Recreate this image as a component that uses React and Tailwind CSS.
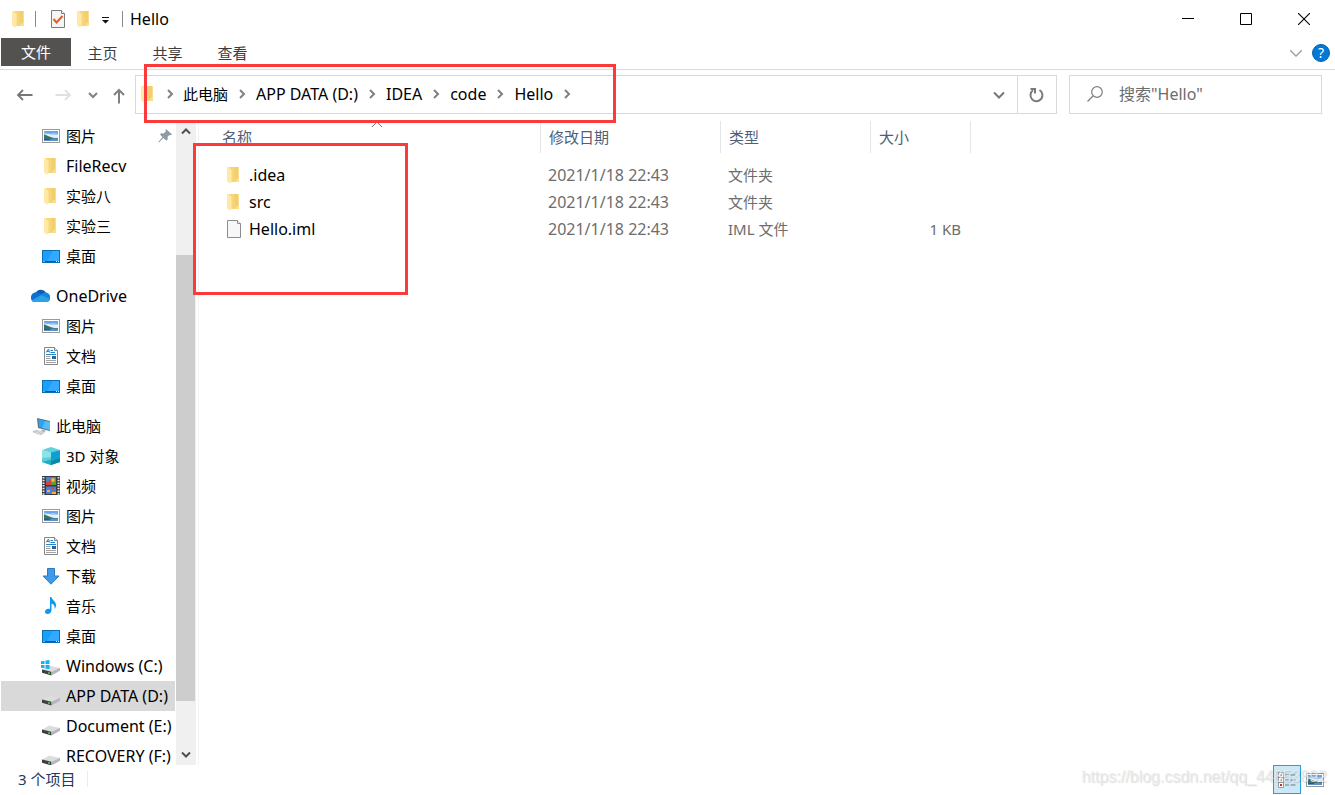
const ICON = 'h-5 w-5 shrink-0'

function FolderIcon({ className = ICON }) {
  return (
    <svg className={className} viewBox="0 0 20 20" aria-hidden="true">
      <path d="M6 2h9.5v11.500h.5V17H7z" fill="#f5d67c" />
      <path d="M11 2h4.500v11.500L12 15z" fill="#f3cf6b" />
      <path d="M14 13.500h2V17h-4z" fill="#fbe08a" />
      <path d="M4 2h1l3.500 3v12L7 18.500 4 16.500z" fill="#ffe9a6" />
    </svg>
  )
}

function PictureIcon({ className = ICON }) {
  return (
    <svg className={className} viewBox="0 0 20 20" aria-hidden="true">
      <rect x="2.5" y="3.5" width="17" height="13" fill="#fff" stroke="#9a9a9a" />
      <rect x="4" y="5" width="14" height="10" fill="#a9d0f5" />
      <path d="M4 5h14v3l-5-1-4 1-5-1.5z" fill="#6ba6ec" />
      <path d="M6 8.5c2-1.5 4-.5 5 .5h7v3H4V9z" fill="#e3f1fb" />
      <path d="M4 8.5c3 .5 6 3 10 3.500h4v1H4z" fill="#3f6f62" />
      <path d="M4 12.500h14V15H4z" fill="#5a92c8" />
      <path d="M4 12.500h8l-3 1.500H4z" fill="#2f5a5e" />
    </svg>
  )
}

function DesktopIcon() {
  return (
    <svg className={ICON} viewBox="0 0 20 20" aria-hidden="true">
      <rect x="2.5" y="4.5" width="17" height="12" fill="#1a9fff" stroke="#0b6fb5" />
      <path d="M13 5h6v10H7z" fill="#33aaff" />
      <path d="M3 15.500h16" stroke="#0a5a97" />
      <path d="M3.500 15.500h1M16 15.500h1M18 15.500h1" stroke="#fff" />
    </svg>
  )
}

function DocumentIcon() {
  return (
    <svg className={ICON} viewBox="0 0 20 20" aria-hidden="true">
      <path d="M4.500 1.500h10l3 3v14h-13z" fill="#fff" stroke="#868686" />
      <path d="M14.500 1.500v3h3" fill="#e8e8e8" stroke="#868686" />
      <path d="m6 6.500 2.500-3.500 1 3.500M7 5.500h2M10.500 4.500H13M10.500 6.500H15M6 8.500h10" stroke="#1e88d2" fill="none" />
      <path d="M6 10.500h4.500M6 12.500h4.500M6 14.500h10M6 16.500h10" stroke="#a3a3a3" />
      <rect x="12" y="10" width="4" height="3" fill="#2568a5" />
    </svg>
  )
}

function OneDriveIcon() {
  return (
    <svg className={ICON} viewBox="0 0 20 20" aria-hidden="true">
      <path d="M5.500 7A6 6 0 0 1 16 6.500L12 11z" fill="#0a5cb3" />
      <path d="M5 6.500c2.500-.8 4 .2 6 1.500L15 11 4 16a5 5 0 0 1 1-9.500z" fill="#1070cf" />
      <path d="M11 8.500c1.200-1.800 3.300-2.400 5-2 0 0 4.300.8 4.300 4.900 0 1.500-.4 2.600-.9 3.200z" fill="#1685dc" />
      <path d="M1.500 14.500 11 9l9 4.200A3.500 3.500 0 0 1 16.500 16H5a4.500 4.500 0 0 1-3.500-1.500z" fill="#28a3ea" />
    </svg>
  )
}

function ComputerIcon() {
  return (
    <svg className={ICON} viewBox="0 0 20 20" aria-hidden="true">
      <path d="M7 2 20.500 5v10L8 12z" fill="#557386" />
      <path d="M8.500 3.300 20 6v8L9 11z" fill="#29a4f2" />
      <path d="M15 4.900 20 6v8l-8-2.200z" fill="#58bcf7" />
      <path d="m12 13.500 4 1-2 2-3.500-1z" fill="#aab1b6" />
      <path d="m1.500 16 5-2.500 9 3-5 3z" fill="#dde0e2" />
      <path d="m3 16 3.500-1.600M5 16.700l3.500-1.700M7.500 17.500l3.500-1.800M10 18.400l3.500-1.800" stroke="#b9bfc4" />
    </svg>
  )
}

function CubeIcon() {
  return (
    <svg className={ICON} viewBox="0 0 20 20" aria-hidden="true">
      <path d="m2 4 9-3 9 3-9 3z" fill="#63d0e0" />
      <path d="M2 4v12l9 3V6.500z" fill="#8ee2ea" />
      <path d="M2 12v4l9 3v-8z" fill="#5fcdda" />
      <path d="M20 4v12l-9 3V6.500z" fill="#0fa0d0" />
      <path d="M11 15.500 20 12v4l-9 3z" fill="#0b87a8" />
      <path d="M2 16l9-2.500V19z" fill="#22aebf" />
    </svg>
  )
}

function VideoIcon() {
  return (
    <svg className={ICON} viewBox="0 0 20 20" aria-hidden="true">
      <rect x="2" y="0" width="18" height="19" fill="#3b3b3b" />
      <path d="M3.500 1v18M18.500 1v18" stroke="#e8e8e8" strokeWidth="2" strokeDasharray="1.500 1.200" />
      <rect x="6" y="1" width="10" height="8" fill="#4a7fe0" />
      <rect x="6" y="10.500" width="10" height="7.500" fill="#4a7fe0" />
      <path d="M6 6h3V4h2v5H6z" fill="#d8432c" />
      <circle cx="13" cy="4" r="2" fill="#f3b823" />
      <path d="M11 6h5v3h-5z" fill="#54a23a" />
      <path d="M10 11h5l-2.500 3z" fill="#e0482c" />
      <path d="M7 14h3v2H7zM12 16h4v2h-4z" fill="#f3b823" />
    </svg>
  )
}

function DownloadIcon() {
  return (
    <svg className={ICON} viewBox="0 0 20 20" aria-hidden="true">
      <path d="M7.500 2.500h7V10H19l-8 8.200L3 10h4.500z" fill="#3e9be9" stroke="#2b7cc4" />
    </svg>
  )
}

function MusicIcon() {
  return (
    <svg className={ICON} viewBox="0 0 20 20" aria-hidden="true">
      <path d="M10 1h1.500c.3 3 4.500 4 4.500 8 0 1.700-.6 3-1.500 4 .5-3-.5-4.500-3-5.500V14c0 2.500-2 4-4 4S5 17 5 15.600c0-1.700 1.600-2.800 3.500-2.800.6 0 1 .1 1.500.3z" fill="#0d99f2" />
    </svg>
  )
}

function DriveIcon({ system = false }) {
  return (
    <svg className={ICON} viewBox="0 0 20 20" aria-hidden="true">
      <path d="m2 14 7-4.500 11 2.500-9 3.800z" fill="#dcdddf" />
      <path d="m2 13.500 9.500 2.300v3.700L2 16.800z" fill="#3c3e41" />
      <path d="m11.500 15.800 8.500-4v3l-8.500 4.700z" fill="#b4b6b9" />
      <path d="M8 17h2" stroke="#3fdc4b" strokeWidth="1.500" />
      {system && (
        <path d="M1 5.300 4.500 4.800V8H1zM5.500 4.600 9.500 4v4h-4zM1 9h3.500v3.200L1 11.700zM5.500 9h4v4l-4-.6z" fill="#12b2ef" />
      )}
    </svg>
  )
}

function FileIcon({ className = ICON }) {
  return (
    <svg className={className} viewBox="0 0 20 20" aria-hidden="true">
      <path d="M4.500 1.500h10l3 3v14h-13z" fill="#f7f7f7" stroke="#8c8c8c" />
      <path d="M14.500 1.500v3h3" fill="#fff" stroke="#8c8c8c" />
    </svg>
  )
}

function CheckDocIcon() {
  return (
    <svg className={ICON} viewBox="0 0 20 20" aria-hidden="true">
      <path d="M3.500 1.500h10l3 3v14h-13z" fill="#f5f5f5" stroke="#7d7d7d" />
      <path d="M13.500 1.500v3h3" fill="#fff" stroke="#7d7d7d" />
      <path d="m5.500 10 3 3.500 6-6.500" fill="none" stroke="#ee5a1c" strokeWidth="2" />
    </svg>
  )
}

function PinIcon() {
  return (
    <svg className="h-3.5 w-3.5" viewBox="0 0 14 14" aria-hidden="true">
      <path d="M8 0l6 5.500-1.200.8-1.300-.3-2 2 .3 2.500-1.500 1L5.300 9 1 13.500l-.7-.6L4.500 8 2 5.500l1.200-1.300 2.600.2 2-2-.3-1.200z" fill="#8e9aa5" />
    </svg>
  )
}

function Chevron({ d, className, stroke = '#6d6d6d', width = 2, box = '0 0 10 10' }) {
  return (
    <svg className={className} viewBox={box} aria-hidden="true">
      <path d={d} fill="none" stroke={stroke} strokeWidth={width} />
    </svg>
  )
}

const groups = [
  {
    items: [
      { label: '图片', Icon: PictureIcon, pinned: true },
      { label: 'FileRecv', Icon: FolderIcon, latin: true },
      { label: '实验八', Icon: FolderIcon },
      { label: '实验三', Icon: FolderIcon },
      { label: '桌面', Icon: DesktopIcon },
    ],
  },
  {
    root: { label: 'OneDrive', Icon: OneDriveIcon, latin: true },
    items: [
      { label: '图片', Icon: PictureIcon },
      { label: '文档', Icon: DocumentIcon },
      { label: '桌面', Icon: DesktopIcon },
    ],
  },
  {
    root: { label: '此电脑', Icon: ComputerIcon },
    items: [
      { label: '3D 对象', Icon: CubeIcon },
      { label: '视频', Icon: VideoIcon },
      { label: '图片', Icon: PictureIcon },
      { label: '文档', Icon: DocumentIcon },
      { label: '下载', Icon: DownloadIcon },
      { label: '音乐', Icon: MusicIcon },
      { label: '桌面', Icon: DesktopIcon },
      { label: 'Windows (C:)', Icon: DriveIcon, system: true, latin: true },
      { label: 'APP DATA (D:)', Icon: DriveIcon, active: true, latin: true },
      { label: 'Document (E:)', Icon: DriveIcon, latin: true },
      { label: 'RECOVERY (F:)', Icon: DriveIcon, latin: true },
    ],
  },
]

const files = [
  { name: '.idea', date: '2021/1/18 22:43', type: '文件夹', size: '', Icon: FolderIcon },
  { name: 'src', date: '2021/1/18 22:43', type: '文件夹', size: '', Icon: FolderIcon },
  { name: 'Hello.iml', date: '2021/1/18 22:43', type: 'IML 文件', size: '1 KB', Icon: FileIcon },
]

const crumbs = [
  { label: '此电脑' },
  { label: 'APP DATA (D:)', latin: true },
  { label: 'IDEA', latin: true },
  { label: 'code', latin: true },
  { label: 'Hello', latin: true },
]

function TitleBar() {
  return (
    <header className="flex h-[38px] shrink-0 items-center">
      <div className="flex items-center pl-2">
        <FolderIcon />
        <span className="ml-[7px] h-4 w-px bg-[#8a8a8a]" />
        <button className="ml-3" aria-label="属性"><CheckDocIcon /></button>
        <button className="ml-[5px]" aria-label="新建文件夹"><FolderIcon /></button>
        <button className="ml-2 flex h-5 w-2.5 items-center" aria-label="自定义快速访问工具栏">
          <svg className="h-2.5 w-2.5" viewBox="0 0 10 10" aria-hidden="true">
            <path d="M1 3h7v1H1zM1 6h7L4.500 9.500z" fill="#111" />
          </svg>
        </button>
        <span className="ml-[11px] h-4 w-px bg-[#8a8a8a]" />
      </div>
      <h1 className="flex-1 pl-[7px] text-base leading-5 text-black">Hello</h1>
      <div className="flex h-full pr-0.5">
        <button className="flex w-[58px] items-center justify-center" aria-label="最小化">
          <Chevron className="h-3 w-3" box="0 0 12 12" d="M0 5.500h12" stroke="#000" width={1} />
        </button>
        <button className="flex w-[58px] items-center justify-center" aria-label="最大化">
          <Chevron className="h-3 w-3" box="0 0 12 12" d="M.5.5h11v11H.5z" stroke="#000" width={1} />
        </button>
        <button className="flex w-[58px] items-center justify-center" aria-label="关闭">
          <Chevron className="h-3 w-3" box="0 0 12 12" d="m0 0 12 12M12 0 0 12" stroke="#000" width={1.1} />
        </button>
      </div>
    </header>
  )
}

function Ribbon() {
  const tab = 'h-[30px] w-[65px] pr-0.5'
  return (
    <nav className="flex h-8 shrink-0 items-start border-b border-[#dadbdc] pl-px text-[#3c3c3c]">
      <button className="h-7 w-[70px] bg-[#535251] text-white">文件</button>
      <button className={tab}>主页</button>
      <button className={tab}>共享</button>
      <button className={tab}>查看</button>
      <div className="ml-auto flex h-[30px] items-center gap-2.5 pr-[5px]">
        <button aria-label="展开功能区">
          <Chevron className="h-3 w-3" box="0 0 12 12" d="m0 3 6 6 6-6" stroke="#a0a0a0" width={1.3} />
        </button>
        <button className="flex h-[18px] w-[18px] items-center justify-center rounded-full border border-[#0b62ad] bg-[#0078d7] text-sm leading-4 text-white" aria-label="帮助">?</button>
      </div>
    </nav>
  )
}

function AddressRow() {
  return (
    <div className="flex h-[51px] shrink-0 items-start pr-[13px] pt-[5px]">
      <div className="flex h-[39px] w-[135px] shrink-0 items-center pl-[15px]">
        <button aria-label="后退">
          <Chevron className="h-[18px] w-[18px]" box="0 0 18 18" d="M17.500 9H3M8 4 3 9l5 5" stroke="#777" width={1.8} />
        </button>
        <button className="ml-[21px]" aria-label="前进">
          <Chevron className="h-[18px] w-[18px]" box="0 0 18 18" d="M1.500 9H16M11 4l5 5-5 5" stroke="#e0e0e0" width={1.8} />
        </button>
        <button className="ml-4" aria-label="最近浏览的位置">
          <Chevron className="h-2.5 w-2.5" d="m1 3 4 4 4-4" stroke="#808080" />
        </button>
        <button className="ml-3" aria-label="上移">
          <Chevron className="h-[18px] w-[18px]" box="0 0 18 18" d="M9 17.500V4M4 9l5-5 5 5" stroke="#808080" />
        </button>
      </div>
      <div className="flex h-[39px] min-w-0 flex-1 border border-[#d9d9d9]">
        <div className="flex min-w-0 flex-1 items-center pb-0.5 pl-px">
          <FolderIcon />
          <Chevron className="ml-2 mr-2 h-2.5 w-2.5" d="m3 1 4 4-4 4" stroke="#808080" />
          {crumbs.map(({ label, latin }) => (
            <div key={label} className="flex items-center whitespace-nowrap">
              <button className={latin ? 'text-base leading-5 text-black' : 'text-black'}>{label}</button>
              <Chevron className="mx-[9px] h-2.5 w-2.5" d="m3 1 4 4-4 4" stroke="#808080" />
            </div>
          ))}
        </div>
        <button className="w-9 shrink-0" aria-label="展开地址">
          <Chevron className="mx-auto h-3 w-3" box="0 0 12 12" d="m1 3.500 5 5 5-5" stroke="#777" />
        </button>
        <button className="w-[39px] shrink-0 border-l border-[#d9d9d9]" aria-label="刷新">
          <svg className="mx-auto h-4 w-4" viewBox="0 0 16 16" aria-hidden="true">
            <path d="M10.500 3A6 6 0 1 1 4 3.300" fill="none" stroke="#7a7a7a" strokeWidth="2" />
            <path d="M1.500 2H6v4.500" fill="none" stroke="#7a7a7a" strokeWidth="2" />
          </svg>
        </button>
      </div>
      <label className="ml-3 flex h-[39px] w-[253px] shrink-0 items-center border border-[#d9d9d9] pb-0.5 pl-[17px]">
        <svg className="h-4 w-4 shrink-0" viewBox="0 0 16 16" aria-hidden="true">
          <circle cx="10" cy="6" r="5.300" fill="none" stroke="#808080" strokeWidth="1.200" />
          <path d="M6 10 .5 15.500" stroke="#808080" strokeWidth="1.300" />
        </svg>
        <input
          className="ml-4 min-w-0 flex-1 bg-transparent text-base leading-5 text-[#6d6d6d] outline-none placeholder:text-[#6d6d6d]"
          type="search"
          aria-label="搜索"
          placeholder={'搜索"Hello"'}
        />
      </label>
    </div>
  )
}

function SideItem({ item, root = false }) {
  const { Icon } = item
  return (
    <li>
      <a
        href="#"
        className={[
          'ml-px flex h-[30px] items-center gap-1.5 whitespace-nowrap text-black',
          root ? 'pl-[29px]' : 'pl-[39px]',
          item.active ? 'bg-[#d9d9d9]' : '',
        ].join(' ')}
      >
        <Icon {...(item.system ? { system: true } : {})} />
        <span className={item.latin ? 'text-base leading-5' : ''}>{item.label}</span>
        {item.pinned && <span className="ml-auto pr-[3px]"><PinIcon /></span>}
      </a>
    </li>
  )
}

function Sidebar() {
  return (
    <aside className="flex w-[196px] shrink-0">
      <nav className="flex h-full w-[175px] flex-col gap-2.5 overflow-hidden">
        {groups.map((group, i) => (
          <ul key={i} className="shrink-0">
            {group.root && <SideItem item={group.root} root />}
            {group.items.map((item) => <SideItem key={item.label} item={item} />)}
          </ul>
        ))}
      </nav>
      <div className="ml-px flex h-full w-5 flex-col bg-[#f0f0f0]">
        <button className="flex h-5 shrink-0 items-center justify-center" aria-label="向上滚动">
          <Chevron className="h-2.5 w-2.5" d="m1 7.500 4-4 4 4" stroke="#505050" />
        </button>
        <div className="grow-[114]" />
        <div className="w-[19px] grow-[446] bg-[#cdcdcd]" />
        <div className="grow-[44]" />
        <button className="flex h-5 shrink-0 items-center justify-center" aria-label="向下滚动">
          <Chevron className="h-2.5 w-2.5" d="m1 2.500 4 4 4-4" stroke="#505050" />
        </button>
      </div>
    </aside>
  )
}

function FileTable() {
  const th = 'relative border-r border-[#e5e5e5] pl-2 text-left font-normal'
  return (
    <main className="ml-0.5 min-w-0 flex-1 overflow-hidden border-l border-[#f3f3f3] pl-[15px]">
      <table className="w-[757px] table-fixed border-separate border-spacing-0">
        <colgroup>
          <col className="w-[327px]" />
          <col className="w-[180px]" />
          <col className="w-[150px]" />
          <col className="w-[100px]" />
        </colgroup>
        <thead className="text-[#4c607a]">
          <tr className="h-8">
            <th className={th}>
              名称
              <Chevron className="absolute left-1/2 top-0 -ml-1.5 h-2 w-3" box="0 0 12 8" d="m1 6 5-5 5 5" stroke="#777" width={1} />
            </th>
            <th className={th}>修改日期</th>
            <th className={th}>类型</th>
            <th className={th}>大小</th>
          </tr>
        </thead>
        <tbody className="text-[#6d6d6d]">
          <tr className="h-2" aria-hidden="true"><td className="p-0" colSpan={4} /></tr>
          {files.map(({ name, date, type, size, Icon }) => (
            <tr key={name} className="h-[27px]">
              <td className="p-0">
                <div className="flex items-center gap-1.5 pl-[9px] text-base leading-5 text-black">
                  <Icon />
                  {name}
                </div>
              </td>
              <td className="p-0 pl-[7px] text-base leading-5">{date}</td>
              <td className="p-0 pl-[7px]">{type}</td>
              <td className="p-0 pr-2.5 text-right">{size}</td>
            </tr>
          ))}
        </tbody>
      </table>
    </main>
  )
}

function StatusBar() {
  return (
    <footer className="relative flex h-[30px] shrink-0 items-start pl-[18px] pr-[11px]">
      <span className="pt-1 text-[#1e395b]">3 个项目</span>
      <span className="ml-3 mt-1.5 h-4 w-px bg-[#ececec]" />
      <div className="ml-auto flex items-center gap-[3px]">
        <button className="flex h-[29px] w-7 items-center justify-center border border-[#26a0da] bg-[#cce8f6]" aria-label="详细信息">
          <svg className="h-[18px] w-5" viewBox="0 0 20 18" aria-hidden="true">
            <path d="M1.500 1.500h5v15h-5zM1.500 6.500h5M1.500 11.500h5" fill="#fff" stroke="#9a9a9a" />
            <path d="M3 3h2v2H3z" fill="#9fb9c8" />
            <path d="M3 8h2v2H3z" fill="#e08a5a" />
            <path d="M3 13h2v2H3z" fill="#c8321f" />
            <path d="M8 4h4M13.500 4h5M8 9h4M13.500 9h5M8 14h4M13.500 14h5" stroke="#6f7a80" />
          </svg>
        </button>
        <button aria-label="大缩略图"><PictureIcon /></button>
      </div>
      <span className="pointer-events-none absolute bottom-2 right-2 font-['Liberation_Sans'] text-base leading-5 text-[#ebebeb]/80 [text-shadow:1px_1px_1px_rgba(0,0,0,0.14)]">
        https://blog.csdn.net/qq_44853892
      </span>
    </footer>
  )
}

export default function App() {
  return (
    <div className="relative flex h-screen flex-col overflow-hidden bg-white font-['Noto_Sans','Noto_Sans_CJK_SC',sans-serif] text-[15px] leading-5">
      <TitleBar />
      <Ribbon />
      <AddressRow />
      <div className="flex min-h-0 flex-1">
        <Sidebar />
        <FileTable />
      </div>
      <StatusBar />
      <div className="pointer-events-none absolute left-36 top-16 h-[59px] w-[472px] border-3 border-[#fc3a3a]" />
      <div className="pointer-events-none absolute left-[193px] top-[143px] h-[152px] w-[215px] border-3 border-[#fc3a3a]" />
    </div>
  )
}
